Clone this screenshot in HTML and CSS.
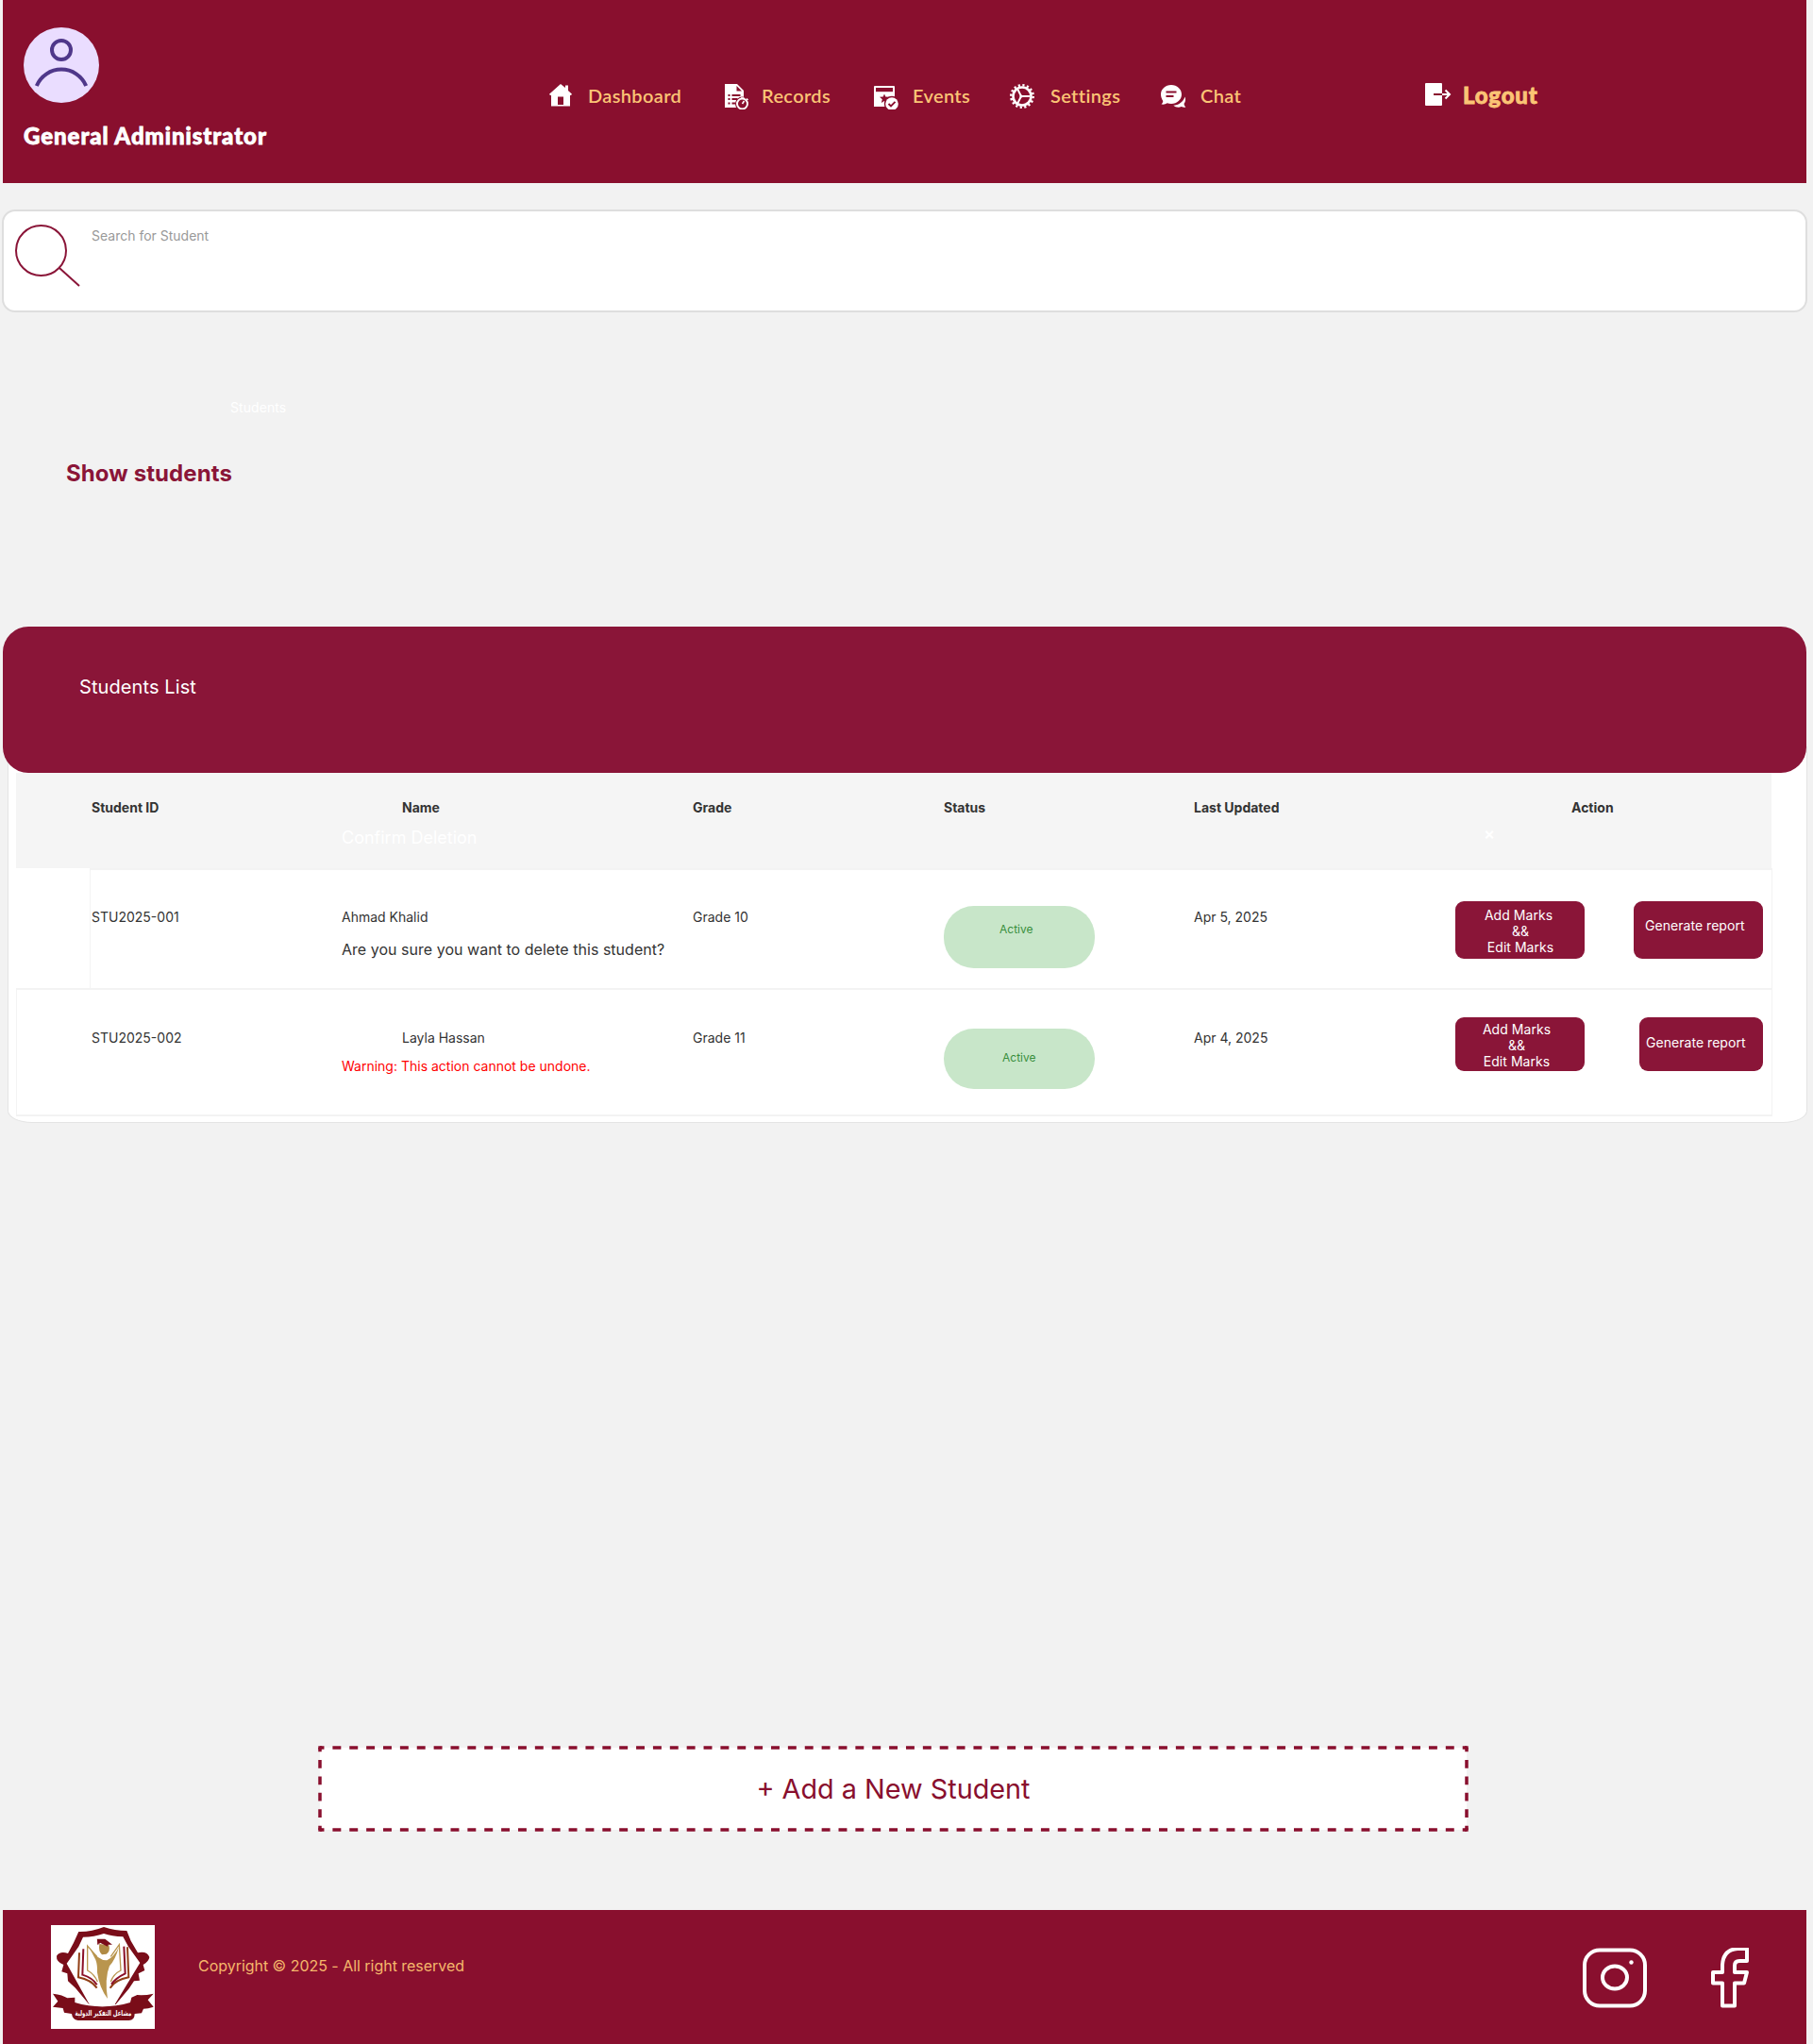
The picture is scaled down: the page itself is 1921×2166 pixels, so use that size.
FILE: index.html
```html
<!DOCTYPE html>
<html lang="en">
<head>
<meta charset="utf-8">
<title>Students</title>
<link rel="stylesheet" href="styles.css">
</head>
<body>
<header class="topbar">
  <div class="profile">
    <svg class="avatar" viewBox="0 0 80 80" width="80" height="80">
      <circle cx="40" cy="40" r="40" fill="#eaddff"/>
      <g fill="none" stroke="#4f378a" stroke-width="4">
        <circle cx="40" cy="24" r="10"/>
        <path d="M13.8 62A28.4 28.4 0 0 1 66.200 62"/>
      </g>
    </svg>
    <div class="role">General Administrator</div>
  </div>
  <nav class="nav">
    <a class="nav-item dashboard">
      <svg viewBox="0 0 28 28" width="28" height="28" fill="#fff"><path d="M13 1 18 5V2.500h3V8l4 3.800-1 1.200h-1V24.500H3V13H2L1 11.800ZM10 14.500v8.500h6v-8.500Z" fill-rule="evenodd"/></svg>
      <span>Dashboard</span>
    </a>
    <a class="nav-item records">
      <svg viewBox="0 0 28 28" width="28" height="28"><path d="M1 1h13l7 7v18H1Z" fill="#fff"/><path d="M13.500 3v5.500h5.500Z" fill="#890f2e"/><path d="M4.500 13h2M8.500 13h9M4.500 17h2M8.500 17h6M4.500 21.500h2M8.500 21.500h4" stroke="#890f2e" stroke-width="1.800"/><circle cx="19.500" cy="22" r="7.500" fill="#890f2e"/><circle cx="19.500" cy="22" r="5.500" fill="none" stroke="#fff" stroke-width="2"/><path d="M19.500 22l2-3M18 16h3.500M24 16.500l1.500 1.500" stroke="#fff" stroke-width="1.600"/></svg>
      <span>Records</span>
    </a>
    <a class="nav-item events">
      <svg viewBox="0 0 28 28" width="28" height="28"><path d="M2 3h20q1 0 1 1v21H1V4q0-1 1-1Z" fill="#fff"/><path d="M3 5h18v4.200H3Z" fill="#890f2e"/><path d="m12 11.500 1.300 3 3.700.200-2.800 2.600 1 3.700-3.200-2-3.200 2 1-3.700L7 14.700l3.700-.2Z" fill="#890f2e"/><circle cx="20" cy="22" r="8.200" fill="#890f2e"/><circle cx="20" cy="22" r="6.800" fill="#fff"/><path d="m16.500 22 2.500 2.500 4.500-4.700" fill="none" stroke="#890f2e" stroke-width="1.900"/></svg>
      <span>Events</span>
    </a>
    <a class="nav-item settings">
      <svg viewBox="0 0 28 28" width="28" height="28" fill="none" stroke="#fff"><circle cx="14" cy="14" r="11.700" stroke-width="2.600" stroke-dasharray="2.200 2.395"/><circle cx="14" cy="14" r="9.500" stroke-width="2.600"/><path d="M14 14h8M13 14 9.500 7M13 14 9.500 21" stroke-width="1.900"/><circle cx="13" cy="14" r="1.600" fill="#fff" stroke="none"/></svg>
      <span>Settings</span>
    </a>
    <a class="nav-item chat">
      <svg viewBox="0 0 28 28" width="28" height="28"><path d="M26.500 14.500c1 2.500.8 5.500-1 7.500.2 1.300.8 2.600 1.800 3.600-1.500.5-3 .2-4.500-.6-3 1.400-6.500.6-8.500-1.300 5.500-.2 10.500-3.700 12.200-9.200Z" fill="#fff"/><path d="M12 2c6.200 0 11 4.500 11 10s-4.800 10-11 10c-1.600 0-3-.2-4.200-.7-1.800 1.200-4 1.600-6.300 1.200 1-.9 1.700-2.100 1.800-3.500C2 17 1 14.700 1 12 1 6.500 5.800 2 12 2Z" fill="#fff"/><path d="M6.500 9.500h11M6.500 14h8" stroke="#890f2e" stroke-width="2"/></svg>
      <span>Chat</span>
    </a>
  </nav>
  <a class="logout">
    <svg viewBox="0 0 28 26" width="28" height="26" fill="none"><rect x="0" y="1" width="18" height="24" rx="1" fill="#fff"/><path d="M9 13h9" stroke="#890f2e" stroke-width="2"/><path d="M18 13h8M21.500 8.500 26 13l-4.500 4.500" stroke="#fff" stroke-width="2"/></svg>
    <span>Logout</span>
  </a>
</header>

<div class="search">
  <svg viewBox="0 0 72 70" width="72" height="70" fill="none" stroke="#8a1538" stroke-width="2"><circle cx="29.500" cy="31.500" r="26.500"/><path d="m49 50 21 19"/></svg>
  <span>Search for Student</span>
</div>

<div class="crumb">Students</div>
<h1 class="title">Show students</h1>

<section class="list">
  <h2 class="list-head">Students List</h2>
  <div class="card">
    <div class="row head">
      <div>Student ID</div>
      <div><div class="indent">Name</div><p class="modal-title">Confirm Deletion</p></div>
      <div>Grade</div>
      <div>Status</div>
      <div>Last Updated</div>
      <div><div class="action-head">Action</div><div class="close">×</div></div>
    </div>
    <div class="row first">
      <div>STU2025-001</div>
      <div>Ahmad Khalid<p class="question">Are you sure you want to delete this student?</p></div>
      <div>Grade 10</div>
      <div><span class="pill">Active</span></div>
      <div>Apr 5, 2025</div>
      <div class="actions"><button class="btn marks">Add Marks 
&amp;&amp;
Edit Marks</button><button class="btn report">Generate report</button></div>
    </div>
    <div class="row second">
      <div>STU2025-002</div>
      <div><div class="indent">Layla Hassan</div><p class="warning">Warning: This action cannot be undone.</p></div>
      <div>Grade 11</div>
      <div><span class="pill">Active</span></div>
      <div>Apr 4, 2025</div>
      <div class="actions"><button class="btn marks">Add Marks
&amp;&amp;
Edit Marks</button><button class="btn report">Generate report</button></div>
    </div>
  </div>
</section>

<div class="add">
  <svg class="dashes" viewBox="0 0 1219 91" width="1219" height="91" stroke="#890f2e" stroke-width="3.500">
    <g stroke-dasharray="8.935 8.935" stroke-dashoffset="4.467"><path d="M2 2H1217M2 89H1217"/></g>
    <g stroke-dasharray="8.700 8.700" stroke-dashoffset="4.350"><path d="M2 2V89M1217 2V89"/></g>
    <path d="M.3 2H4M1215 2h3.700M.3 89H4M1215 89h3.700"/>
  </svg>
  <span>+ Add a New Student</span>
</div>

<footer class="footer">
  <svg class="logo" viewBox="162 120 330 330" width="110" height="110">
    <path d="M162 120h330v330H162Z" fill="#fff"/>
    <path d="M330 126Q365 138 403 138L416 170 438 208Q468 202 475 222 473 236 455 246L460 264 440 274 444 296 426 298 410 322 368 372H283L240 320 216 298 214 274 196 268 202 246Q178 236 180 218 190 202 216 210L234 176 250 141Q290 142 330 126ZM330 147Q300 158 264 158L250 188 212 242 284 372H365L445 240 408 188 391 157Q355 156 330 147Z" fill="#7a0d19" fill-rule="evenodd"/>
    <path d="M168 338Q200 342 214 352L238 350V366Q325 392 414 366L418 350 436 342Q460 344 488 338L470 358 488 380Q470 386 456 386L450 400 428 402Q428 424 408 423H248Q230 420 228 402L204 398 200 384 168 380 184 362Z" fill="#7a0d19"/>
    <path d="M284 370Q325 388 366 370L368 360H282Z" fill="#fff"/>
    <g fill="none" stroke-width="6">
      <path d="M252 208 249 286Q290 294 308 320M405 190 409 286Q366 294 350 320" stroke="#913f16"/>
      <path d="M265 196 262 278Q295 288 308 310M394 188 398 274Q368 288 354 308" stroke="#8b1027"/>
      <path d="M308 220 278 186V264Q300 276 310 300M352 220 379 182 384 264Q360 276 352 300" stroke="#b9954e" stroke-width="4"/>
    </g>
    <path d="M284 192Q314 234 340 232 362 222 378 190 366 232 348 250 332 290 342 354 316 320 309 270 310 246 304 230Z" fill="#b9954e"/>
    <path d="M316 180 346 184Q352 204 338 212L324 214Q312 204 316 180Z" fill="#b08b45"/>
    <path d="M308 164 334 164 357 182 344 182 342 188 318 176 314 182Z" fill="#7a0d19"/>
    <path d="M311 166V182" stroke="#7a0d19" stroke-width="3"/>
    <text class="logo-text" transform="translate(328 408) scale(.74 1.1)" text-anchor="middle">مشاعل التفكير الدولية</text>
  </svg>
  <p class="copyright">Copyright © 2025 - All right reserved</p>
  <div class="social">
    <svg viewBox="0 0 68 64" width="68" height="64" fill="none" stroke="#fff" stroke-width="4"><rect x="2" y="2.500" width="64" height="59" rx="16"/><ellipse cx="34" cy="31.500" rx="13" ry="12"/><circle cx="51.500" cy="15.500" r="2.200" fill="#fff" stroke="none"/></svg>
    <svg viewBox="0 0 40 64" width="40" height="64" fill="none" stroke="#fff" stroke-width="4" stroke-linejoin="round"><path d="M38 1V14H30Q25 14 25 19V26H38L35 37.500H25V61.500H12V37.500H2V26H12V18Q13 2 28 1Z"/></svg>
  </div>
</footer>
</body>
</html>
```

FILE: styles.css
```css
* { box-sizing: border-box; }

body {
  margin: 0;
  width: 1921px;
  height: 2166px;
  background: #f2f2f2;
  color: #333;
  font: 14px/17px Inter, sans-serif;
  display: flex;
  flex-direction: column;
  overflow: hidden;
}

p, h1, h2 { margin: 0; }
svg { display: block; flex: none; }

.topbar {
  width: 1911px;
  height: 194px;
  margin-left: 3px;
  background: #890f2e;
  display: flex;
  align-items: flex-start;
  font-family: Lato, sans-serif;
  flex: none;
}

.profile { width: 578px; padding: 29px 0 0 22px; }

.role {
  margin-top: 20px;
  font-size: 24px;
  line-height: 30px;
  font-weight: 900;
  color: #fff;
  letter-spacing: 0.95px;
  -webkit-text-stroke: 0.8px #fff;
  white-space: nowrap;
}

.nav { display: flex; padding-top: 88px; width: 929px; }

.nav-item {
  display: flex;
  color: #fbc475;
  font-size: 20px;
  line-height: 26px;
  font-weight: 600;
  letter-spacing: 0.35px;
  white-space: nowrap;
}

.dashboard { width: 186px; gap: 14px; }
.records { width: 158px; gap: 12px; }
.events { width: 144px; gap: 14px; }
.settings { width: 160px; gap: 16px; }
.chat { gap: 15px; }

.logout {
  display: flex;
  gap: 12px;
  padding-top: 87px;
  color: #fbc475;
  font-size: 24px;
  line-height: 28px;
  font-weight: 900;
  letter-spacing: 0.8px;
  -webkit-text-stroke: 0.8px #fbc475;
}

.search {
  flex: none;
  width: 1913px;
  height: 109px;
  margin: 28px 0 0 2px;
  border: 2px solid #dedede;
  border-radius: 14px;
  background: #fff;
  display: flex;
  gap: 11px;
  padding: 10px 0 0 10px;
  color: #999;
}

.search span { padding-top: 7px; }

.crumb { margin: 92px 0 0 244px; color: #fff; letter-spacing: 0.08px; }

.title {
  margin: 47px 0 0 70px;
  font-size: 24px;
  line-height: 30px;
  font-weight: 700;
  letter-spacing: 0.1px;
  color: #8a1538;
}

.list { margin-top: 147px; }

.list-head {
  position: relative;
  width: 1911px;
  height: 155px;
  margin-left: 3px;
  padding: 52px 0 0 81px;
  border-radius: 27px;
  background: #8a1538;
  color: #fff;
  font-size: 20px;
  line-height: 24px;
  font-weight: 400;
  letter-spacing: 0.1px;
}

.card {
  width: 1907px;
  height: 399px;
  margin: -28px 0 0 8px;
  padding: 28px 36px 0 8px;
  border: 1px solid #e4e4e4;
  border-top: 0;
  border-radius: 0 0 26px 26px / 0 0 13px 13px;
  background: #fff;
}

.row {
  display: grid;
  grid-template-columns: 265px 372px 266px 265px 277px 1fr;
  padding-left: 80px;
}

.head { height: 101px; background: #f5f5f5; font-weight: 700; width: 1860px; }
.head > div { padding-top: 28px; }
.indent { padding-left: 64px; }

.modal-title {
  margin-top: 13px;
  font-size: 18px;
  line-height: 22px;
  font-weight: 400;
  color: #fff;
}

.action-head { padding-left: 123px; }
.close { padding-left: 30px; margin-top: 10px; font-size: 18px; line-height: 20px; font-weight: 600; color: #fff; }

.first {
  height: 127px;
  width: 1783px;
  margin-left: 78px;
  padding-left: 1px;
  border: 1px solid #f3f3f3;
  border-width: 2px 1px 0;
}

.second {
  height: 136px;
  width: 1861px;
  padding-left: 79px;
  border: 1px solid #f3f3f3;
  border-width: 2px 1px;
}

.first > div { padding-top: 41px; }
.second > div { padding-top: 42px; }
.question { margin-top: 17px; font-size: 16px; line-height: 19px; letter-spacing: 0.03px; }
.warning { margin-top: 13px; color: #f00; }

.row > div:has(.pill) { padding-top: 38px; }
.second > div:has(.pill) { padding-top: 41px; }

.pill {
  display: block;
  width: 160px;
  height: 66px;
  padding: 17px 0 0 59px;
  border-radius: 32px;
  background: #c8e6c9;
  color: #388e3c;
  font-size: 12px;
  line-height: 15px;
}

.second .pill { height: 64px; padding: 23px 0 0 62px; }

.row .actions { display: flex; justify-content: space-between; align-items: flex-start; width: 326px; padding-top: 33px; }
.second .actions { padding-top: 29px; }

.btn {
  width: 137px;
  height: 61px;
  margin: 0;
  padding: 0;
  border: 0;
  border-radius: 9px;
  background: #8a1538;
  color: #fff;
  font: inherit;
  letter-spacing: 0.04px;
  white-space: pre;
  display: flex;
  align-items: flex-start;
  justify-content: center;
  text-align: center;
}

.second .btn { height: 57px; }
.marks { padding: 6px 0 0 1px; }
.second .marks { padding: 4px 7px 0 0; }
.btn.report { justify-content: flex-start; padding: 17px 0 0 12px; }
.second .btn.report { width: 131px; padding: 18px 0 0 7px; }

.add {
  position: relative;
  flex: none;
  width: 1219px;
  height: 91px;
  margin: 660px 0 0 337px;
  border: 2px solid transparent;
  background: #fff content-box;
  display: flex;
  justify-content: center;
  color: #890f2e;
  font-size: 28.8px;
  line-height: 87px;
}

.dashes { position: absolute; left: -2px; top: -2px; }

.footer {
  flex: none;
  display: flex;
  align-items: flex-start;
  width: 1911px;
  height: 142px;
  margin: 83px 0 0 3px;
  padding: 16px 61px 0 51px;
  background: #890f2e;
}

.logo-text { font: bold 22px "DejaVu Sans", sans-serif; fill: #fff; }

.copyright { margin: 34px 0 0 46px; font-size: 16px; line-height: 19px; letter-spacing: -0.03px; color: #f5b76b; }

.social { display: flex; gap: 68px; margin: 24px 0 0 auto; }
```
